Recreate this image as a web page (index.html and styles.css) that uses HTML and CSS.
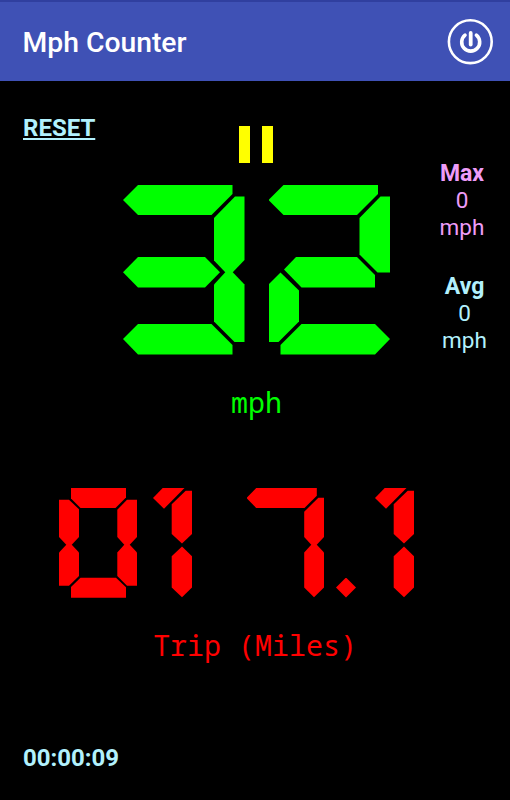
FILE: index.html
```html
<!DOCTYPE html>
<html lang="en">
<head>
    <meta charset="UTF-8">
    <title>Mph Counter</title>
    <link rel="stylesheet" href="styles.css">
</head>
<body>
    <header>
        <h1>Mph Counter</h1>
        <button class="power" aria-label="Power">
            <svg width="46" height="46" viewBox="0 0 46 46" fill="none" stroke="#fff">
                <circle cx="23.3" cy="22.7" r="21.4" stroke-width="2.6"/>
                <path d="M18 16.2A9 9 0 1 0 29.4 16.2" stroke-width="3.6" stroke-linecap="round"/>
                <path d="M23.7 14v11.6" stroke-width="3.8" stroke-linecap="round"/>
            </svg>
        </button>
    </header>

    <main>
        <section class="top">
            <div class="left">
                <a class="reset">RESET</a>
            </div>

            <div class="speed">
                <div class="pause"><i></i><i></i></div>
                <div class="digits" role="img" aria-label="32">
                    <div class="digit three">
                        <i class="a"></i><i class="b"></i><i class="c"></i><i class="d"></i><i class="g"></i>
                    </div>
                    <div class="digit two">
                        <i class="a"></i><i class="b"></i><i class="d"></i><i class="e"></i><i class="g"></i>
                    </div>
                </div>
                <p class="unit">mph</p>
            </div>

            <div class="stats">
                <div class="stat max"><b>Max</b><span>0</span><span>mph</span></div>
                <div class="stat avg"><b>Avg</b><span>0</span><span>mph</span></div>
            </div>
        </section>

        <section class="trip">
            <div class="digits" role="img" aria-label="017.1">
                <div class="digit zero">
                    <i class="a"></i><i class="b"></i><i class="c"></i><i class="d"></i><i class="e"></i><i class="f"></i>
                </div>
                <div class="digit one">
                    <i class="a"></i><i class="b"></i><i class="c"></i>
                </div>
                <div class="digit seven">
                    <i class="a"></i><i class="b"></i><i class="c"></i>
                </div>
                <div class="dot"></div>
                <div class="digit one">
                    <i class="a"></i><i class="b"></i><i class="c"></i>
                </div>
            </div>
            <p class="unit">Trip (Miles)</p>
        </section>
    </main>

    <footer>00:00:09</footer>
</body>
</html>
```
FILE: styles.css
```css
* {
    margin: 0;
    padding: 0;
    box-sizing: border-box;
}

body {
    font-family: Roboto, "Liberation Sans", sans-serif;
    background: #000;
    height: 100vh;
    display: flex;
    flex-direction: column;
    overflow: hidden;
}

header {
    height: 81px;
    background: #3f51b5;
    border-top: 2px solid #303f9f;
    padding: 0 17px 0 22.5px;
    display: flex;
    justify-content: space-between;
    align-items: center;
}

h1 {
    font-size: 28.3px;
    font-weight: 500;
    color: #fff;
    padding-top: 2px;
}

.power {
    width: 46px;
    height: 46px;
    border: none;
    background: none;
}

.power svg {
    display: block;
}

main {
    flex: 1;
}

.top {
    display: grid;
    grid-template-columns: 123px 267px 1fr;
}

.left {
    padding: 33px 0 0 23px;
}

.reset {
    font-size: 24px;
    line-height: 28px;
    font-weight: 700;
    color: #b2f1fd;
    text-decoration: underline;
    text-decoration-thickness: 2px;
    text-underline-offset: 2px;
}

.pause {
    display: flex;
    justify-content: center;
    gap: 12px;
    margin-top: 45px;
    padding-right: 2px;
}

.pause i {
    width: 11px;
    height: 37px;
    background: #ff0;
}

/* seven segment digits, all segments share one grid cell */
.digits {
    display: flex;
}

.digit {
    display: grid;
}

.digit i {
    grid-area: 1 / 1;
}

.speed .digits {
    margin-top: 22px;
    justify-content: space-between;
}

.speed .digit {
    width: 121.5px;
    height: 169.5px;
}

.speed .digit i {
    background: #0f0;
}

.speed .a {
    clip-path: polygon(0 15px, 15px 0, 109.5px 0, 109.5px 9px, 88.5px 30px, 15px 30px);
}

.three .b {
    clip-path: polygon(112px 11.5px, 121.5px 11.5px, 121.5px 75px, 109.5px 87.5px, 102.5px 87.5px, 91px 75.5px, 91px 33px);
}

.three .c {
    clip-path: polygon(102.5px 87px, 109.5px 87px, 121.5px 99.5px, 121.5px 157px, 111.5px 157px, 91px 136.5px, 91px 99.5px);
}

.three .d {
    clip-path: polygon(0 154px, 15px 139px, 88.5px 139px, 109.5px 160px, 109.5px 169.5px, 15px 169.5px);
}

.three .g {
    clip-path: polygon(0 87.3px, 15px 72px, 82px 72px, 97px 87.3px, 82px 102.5px, 15px 102.5px);
}

.two .b {
    clip-path: polygon(112px 11.5px, 121.5px 11.5px, 121.5px 87.5px, 109px 87.5px, 91px 69.5px, 91px 33px);
}

.two .d {
    clip-path: polygon(12px 160px, 33px 139px, 106.5px 139px, 121.5px 154px, 106.5px 169.5px, 12px 169.5px);
}

.two .e {
    clip-path: polygon(0 99.5px, 12px 87.5px, 30.5px 105.5px, 30.5px 136.5px, 10px 157px, 0 157px);
}

.two .g {
    clip-path: polygon(15.5px 84.5px, 27.5px 72px, 88.5px 72px, 106.5px 90px, 106.5px 102.5px, 33px 102.5px);
}

.unit {
    font-family: "Noto Sans Mono", "DejaVu Sans Mono", monospace;
    font-size: 28.3px;
    line-height: 34px;
    text-align: center;
}

.speed .unit {
    color: #0f0;
    margin-top: 30px;
}

.stats {
    padding-top: 79px;
    font-size: 23px;
    line-height: 27px;
    text-align: center;
}

.stat {
    display: flex;
    flex-direction: column;
}

.stat span {
    font-size: 22.5px;
}

.max {
    color: #ee9cf8;
    padding-left: 24px;
}

.avg {
    color: #b2f1fd;
    margin-top: 32px;
    padding-left: 29px;
}

.trip {
    margin-top: 69.5px;
}

.trip .digits {
    padding-left: 59px;
}

.trip .digit {
    height: 110px;
}

.trip .digit i,
.dot {
    background: #f00;
}

.zero {
    width: 78px;
}

.one {
    width: 39px;
    margin-left: 16px;
}

.seven {
    width: 77.5px;
    margin-left: 54.5px;
}

.dot {
    width: 20px;
    height: 20px;
    margin: 89.5px 3px 0 12px;
    clip-path: polygon(50% 0, 100% 50%, 50% 100%, 0 50%);
}

.zero .a {
    clip-path: polygon(12px 0, 67px 0, 67px 9.5px, 56.5px 20px, 21.5px 20px, 12px 10.5px);
}

.zero .b {
    clip-path: polygon(68px 11.7px, 78px 11.7px, 78px 49px, 70.5px 57px, 65.5px 57px, 58.3px 49px, 58.3px 21.7px);
}

.zero .c {
    clip-path: polygon(65.5px 56.5px, 70.5px 56.5px, 78px 64.5px, 78px 97.7px, 68px 97.7px, 58.3px 88px, 58.3px 64.5px);
}

.zero .d {
    clip-path: polygon(21.5px 89.7px, 57px 89.7px, 67px 99.3px, 67px 109.7px, 12px 109.7px, 12px 99px);
}

.zero .e {
    clip-path: polygon(7.5px 56.5px, 12.5px 56.5px, 20px 64.5px, 20px 88px, 10px 97.7px, 0 97.7px, 0 64.5px);
}

.zero .f {
    clip-path: polygon(0 11.7px, 10px 11.7px, 20px 21.3px, 20px 49px, 12.5px 57px, 7.5px 57px, 0 49px);
}

.one .a {
    clip-path: polygon(0 10px, 9.7px 0, 31.5px 0, 11px 20.7px);
}

.one .b {
    clip-path: polygon(32.7px 2.7px, 39px 2.7px, 39px 46px, 29px 55.5px, 18.7px 46px, 18.7px 16.3px);
}

.one .c {
    clip-path: polygon(29px 58.5px, 39px 68.3px, 39px 99.5px, 29px 109.2px, 18.7px 99.5px, 18.7px 68.3px);
}

.seven .a {
    clip-path: polygon(0 10px, 9.7px 0, 70.3px 0, 70.3px 7.7px, 58px 20px, 9.7px 20px);
}

.seven .b {
    clip-path: polygon(71.8px 9.7px, 77.5px 9.7px, 77.5px 49px, 70px 57px, 65px 57px, 57.7px 49px, 57.7px 23.8px);
}

.seven .c {
    clip-path: polygon(65px 56.5px, 70px 56.5px, 77.5px 64.5px, 77.5px 99.5px, 67.5px 109.2px, 57.7px 99.5px, 57.7px 64.5px);
}

.trip .unit {
    color: #f00;
    margin-top: 29.5px;
}

footer {
    padding: 0 23px 28px;
    font-size: 24px;
    line-height: 28px;
    font-weight: 700;
    color: #b2f1fd;
}
```
